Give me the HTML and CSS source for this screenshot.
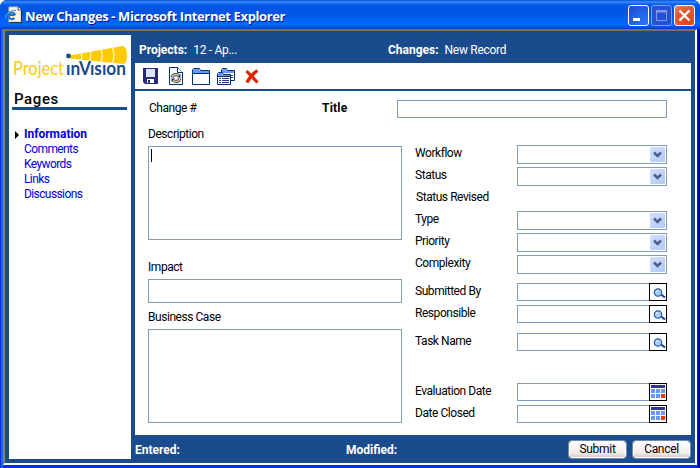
FILE: index.html
```html
<!DOCTYPE html>
<html lang="en">
<head>
<meta charset="utf-8">
<title>New Changes - Microsoft Internet Explorer</title>
<link rel="stylesheet" href="styles.css">
</head>
<body>
<svg width="0" height="0" class="defs">
  <symbol id="chevron" viewBox="0 0 15 15"><path d="M4 5.500l3.500 3.500L11 5.500" fill="none" stroke="#4d6185" stroke-width="2.600"/></symbol>
  <symbol id="search" viewBox="0 0 16 16"><path d="M10.500 10l4.500 3.500" stroke="#164a82" stroke-width="2.200"/><circle cx="8" cy="8.500" r="3.700" fill="#a9cdff" stroke="#245b9b" stroke-width="1.200"/><path d="M6 7.500l1.500-1" stroke="#fff"/></symbol>
  <symbol id="calendar" viewBox="0 0 16 16"><path fill="#333399" d="M1 1h14v3H1z"/><path fill="#6699ff" d="M1 5h4v4H1zM6 5h4v4H6zM11 5h4v4h-4zM1 10h4v4H1zM6 10h4v4H6z"/><path fill="#ff3300" d="M11 10h4v4h-4z"/></symbol>
</svg>
<div class="window">
  <header class="titlebar">
    <svg class="ie" width="18" height="18" viewBox="0 0 18 18"><path d="M4 1h9l3 3v12H4z" fill="#f8f5e6" stroke="#c9c8bb"/><path d="M13 1v3h3" fill="#fff" stroke="#555"/><path d="M16.500 4v12.500H5" fill="none" stroke="#333"/><path d="M10 9H4.500M10.200 9A3.300 3.300 0 1 0 9.500 12" fill="none" stroke="#2371c9" stroke-width="2.100"/><path d="M1 12.500C-.5 9 5 4 11 4.500" fill="none" stroke="#4c9be8" stroke-width="1.200"/></svg>
    <h1>New Changes - Microsoft Internet Explorer</h1>
    <div class="controls">
      <span class="ctl"><svg width="19" height="19"><path d="M4 12h7v3H4z" fill="#fff"/></svg></span>
      <span class="ctl disabled"><svg width="19" height="19"><path d="M4.500 4.500h10v10h-10zM4 6h11" fill="none" stroke="#8297ec"/><path d="M4 4h11v2H4z" fill="#8297ec"/></svg></span>
      <span class="ctl close"><svg width="19" height="19"><path d="M4.500 4.500l10 10M14.500 4.500l-10 10" stroke="#fff" stroke-width="2.300"/></svg></span>
    </div>
  </header>
  <div class="client">
    <aside class="sidebar">
      <svg class="logo" width="116" height="38" viewBox="0 0 116 38">
        <path d="M57 10.500L109 1q5 0 5 9t-4 9L57 13.500z" fill="#ffcb05"/>
        <path d="M68 8q2 3 0 7M77 6q2 5 0 10M88 4q3 7 0 13M99 2q4 8 0 16" fill="none" stroke="#fff" stroke-width="1"/>
        <circle cx="55.500" cy="11" r="2.400" fill="#1c4b8c"/>
        <text x="0" y="30" class="logo-a" textLength="51" lengthAdjust="spacingAndGlyphs">Project</text>
        <text x="53" y="30" class="logo-b" textLength="60" lengthAdjust="spacingAndGlyphs">ınVısıon</text>
      </svg>
      <h2>Pages</h2>
      <nav>
        <a class="active">Information</a>
        <a>Comments</a>
        <a>Keywords</a>
        <a>Links</a>
        <a>Discussions</a>
      </nav>
    </aside>
    <main>
      <div class="crumbs"><div class="crumb"><b>Projects:</b><span>12 - Ap...</span></div><div class="crumb"><b>Changes:</b><span>New Record</span></div></div>
      <div class="toolbar">
        <svg width="15" height="16" viewBox="0 0 15 16"><path d="M0 0h15v16H2l-2-2z" fill="#29297e"/><path d="M3 1h9v8H3z" fill="#d9e3ff"/><path d="M4 11h7v4H4z" fill="#fff"/><path d="M5 12h2v3H5z" fill="#29297e"/></svg>
        <svg class="refresh" width="14" height="18" viewBox="0 0 14 18"><path d="M.5.5h8l5 5v12H.5z" fill="#f8fbff" stroke="#003366"/><path d="M8.500.5v5h5" fill="#fff" stroke="#003366"/><path d="M3.200 10.500q.5-3 3.800-3 2 0 3 1.500M10.800 11.500q-.5 3-3.800 3-2 0-3-1.500" fill="none" stroke="#29297e" stroke-width="2.800"/><path d="M3.200 10.500q.5-3 3.800-3 2 0 3 1.500M10.800 11.500q-.5 3-3.800 3-2 0-3-1.500" fill="none" stroke="#e9d95d" stroke-width="1.400"/><path d="M11.500 7v3.500H8zM2.500 15v-3.500H6z" fill="#29297e"/></svg>
        <svg class="folder" width="18" height="17" viewBox="0 0 18 17"><path d="M.5 16.500V1.500l1-1h6l1 2h9v14z" fill="#fff" stroke="#003366"/><path d="M1 2l1-1h5l1 2h9v2H1z" fill="#6699ff"/><path d="M1 5.500h16" stroke="#003366"/></svg>
        <svg class="folders" width="18" height="17" viewBox="0 0 18 17"><path d="M4.500 12.500v-11l1-1h4l1 2h7v10z" fill="#fff" stroke="#003366"/><path d="M5 2l1-1h3l1 2h7v2H5z" fill="#6699ff"/><path d="M14 7.500h2M14 9.500h2" stroke="#333399"/><path d="M.5 16.500v-11l1-1h4l1 2h7v10z" fill="#fff" stroke="#003366"/><path d="M1 6l1-1h3l1 2h7v1H1z" fill="#6699ff"/><path d="M1 8.500h12" stroke="#003366"/><path d="M2 10.500h2m1 0h7M2 12.500h2m1 0h7M2 14.500h2m1 0h7" stroke="#333399"/></svg>
        <svg class="delete" width="14" height="15" viewBox="0 0 14 15"><path d="M1.500 2L12.500 13.500M12.500 1.500Q6 6 1.800 13.500" fill="none" stroke="#e12500" stroke-width="3.200"/></svg>
      </div>
      <form class="form">
        <div class="top"><span class="num">Change #</span><b class="title-label">Title</b><div class="box"></div></div>
        <div class="columns">
          <div class="left">
            <div class="label desc">Description</div><div class="box area"><i class="caret"></i></div>
            <div class="label impact">Impact</div><div class="box line"></div>
            <div class="label business">Business Case</div><div class="box area"></div>
          </div>
          <div class="right">
            <div class="row"><span>Workflow</span><div class="box select"><svg><use href="#chevron"/></svg></div></div>
            <div class="row"><span>Status</span><div class="box select"><svg><use href="#chevron"/></svg></div></div>
            <div class="row revised"><span>Status Revised</span></div>
            <div class="row"><span>Type</span><div class="box select"><svg><use href="#chevron"/></svg></div></div>
            <div class="row"><span>Priority</span><div class="box select"><svg><use href="#chevron"/></svg></div></div>
            <div class="row after-s"><span>Complexity</span><div class="box select"><svg><use href="#chevron"/></svg></div></div>
            <div class="row"><span>Submitted By</span><div class="box pick"><svg><use href="#search"/></svg></div></div>
            <div class="row after-s"><span>Responsible</span><div class="box pick"><svg><use href="#search"/></svg></div></div>
            <div class="row after-l"><span>Task Name</span><div class="box pick"><svg><use href="#search"/></svg></div></div>
            <div class="row"><span>Evaluation Date</span><div class="box pick"><svg><use href="#calendar"/></svg></div></div>
            <div class="row"><span>Date Closed</span><div class="box pick"><svg><use href="#calendar"/></svg></div></div>
          </div>
        </div>
      </form>
      <footer><b class="entered">Entered:</b><b class="modified">Modified:</b><button type="button">Submit</button><button type="button">Cancel</button></footer>
    </main>
  </div>
</div>
</body>
</html>
```
FILE: styles.css
```css
* { box-sizing: border-box; }
body { margin: 0; width: 700px; height: 468px; overflow: hidden; background: #fff; font: 12px/15px Roboto, "Liberation Sans", sans-serif; letter-spacing: -.45px; color: #000; }
b { letter-spacing: 0; }
svg { display: block; flex: none; }
.defs { position: absolute; }
.window { height: 468px; display: flex; flex-direction: column; border-radius: 7px 7px 0 0; overflow: hidden; background: linear-gradient(90deg, #0831d9 1px, #166aee 1px 3px, #0831d9 3px 697px, #001ee0 697px 698px, #0000a8 698px); }
.titlebar { height: 29px; flex: none; display: flex; align-items: flex-start; padding: 5px 5px 0 5px; background: linear-gradient(#0750d8 0, #3a8dfc 2px, #0761ee 4px, #0054e3 8px, #0055e5 14px, #0064fa 21px, #0066ff 25px, #0048d0 28px, #003bc0 29px); }
.ie { margin-top: 1px; }
h1 { margin: 2px 0 0 2px; flex: 1; font: bold 13px/18px "Open Sans", sans-serif; letter-spacing: -.38px; color: #fff; text-shadow: 1px 1px #0f1089; white-space: nowrap; }
.controls { display: flex; gap: 2px; }
.ctl { width: 21px; height: 21px; border: 1px solid #fff; border-radius: 3px; background: radial-gradient(circle at 80% 80%, #2b72fa, #2360e5 50%, #204bce); }
.disabled { border-color: #809df4; background: #2451d5; }
.close { background: radial-gradient(circle at 70% 80%, #dc4414, #e15c38 60%, #e88367); }
.client { height: 436px; margin: 0 3px 3px; display: flex; background: #1a4b8c; border: solid; border-width: 2px; border-color: #777064 #fff #fff #858076; padding: 4px; gap: 4px; }
.sidebar { width: 122px; background: #fff; padding: 10px 4px 0 3px; }
.logo { margin-left: 1px; }
.logo-a, .logo-b { font-family: Lato, sans-serif; letter-spacing: 0; }
.logo-a { fill: #ffcb05; font-size: 19px; }
.logo-b { fill: #1c4b8c; font-weight: bold; font-size: 18px; }
h2 { margin: 8px 0 0; height: 19px; border-bottom: 3px solid #1a4b8c; padding-left: 2px; font: 500 15px/16px Roboto, sans-serif; letter-spacing: .6px; }
nav { margin-top: 17px; padding-left: 12px; display: flex; flex-direction: column; color: #0000e0; letter-spacing: -.6px; }
.active { position: relative; font-weight: bold; letter-spacing: -.02px; }
.active::before { content: ""; position: absolute; left: -9px; top: 4px; border: 4px solid transparent; border-left-color: #000; border-right: 0; }
main { width: 556px; }
.crumbs { height: 28px; padding: 8px 0 0 4px; display: flex; color: #fff; letter-spacing: -.3px; }
.crumb { width: 249px; display: flex; gap: 6px; }
.toolbar { height: 28px; background: #fff; border-bottom: 2px solid #1a4b8c; display: flex; align-items: center; padding-left: 8px; }
.refresh { margin-left: 11px; }
.folder { margin-left: 9px; }
.folders { margin-left: 7px; }
.delete { margin-left: 10px; }
.form { height: 344px; padding: 8px 24px 0 13px; background: #fff; }
.top { height: 20px; display: flex; }
.num { width: 174px; padding: 2px 0 0 1px; }
.title-label { width: 75px; padding-top: 2px; letter-spacing: .2px; }
.box { border: 1px solid #7f9db9; background: #fff; }
.top .box { flex: 1; height: 18px; margin-top: 1px; }
.columns { display: flex; }
.left { width: 254px; }
.label { height: 15px; }
.desc { margin: 8px 0 4px; }
.impact { margin: 20px 0 4px; }
.business { margin: 7px 0 4px; }
.area { height: 94px; padding: 2px; }
.line { height: 24px; }
.caret { display: block; width: 1px; height: 13px; background: #000; }
.right { width: 252px; margin: 26px 0 0 13px; }
.row { height: 22px; display: flex; }
.row span { width: 102px; padding-top: 1px; }
.after-s { margin-bottom: 6px; }
.after-l { margin-bottom: 28px; }
.revised { padding-left: 1px; }
.select { width: 150px; height: 19px; padding: 1px; display: flex; justify-content: flex-end; }
.select svg { width: 15px; height: 15px; border-radius: 1px; background: linear-gradient(135deg, #d3deff, #b3c9f9); }
.pick { width: 150px; height: 18px; display: flex; justify-content: flex-end; }
.pick svg { width: 18px; height: 18px; border: 1px solid #000; margin: -1px -1px 0 0; background: #fff; }
footer { height: 28px; display: flex; align-items: center; color: #fff; }
footer b { padding-top: 2px; }
.entered { width: 211px; }
.modified { width: 223px; }
button { width: 57px; height: 17px; padding: 0; border: 1px solid #fff; border-radius: 3px; background: linear-gradient(#fff, #f5eeeb 70%, #d9cfcc); font: 12px/15px Roboto, sans-serif; letter-spacing: -.3px; margin-right: 7px; box-shadow: 0 0 0 1px #6f8bad; }
button + button { margin-right: 0; }
```
